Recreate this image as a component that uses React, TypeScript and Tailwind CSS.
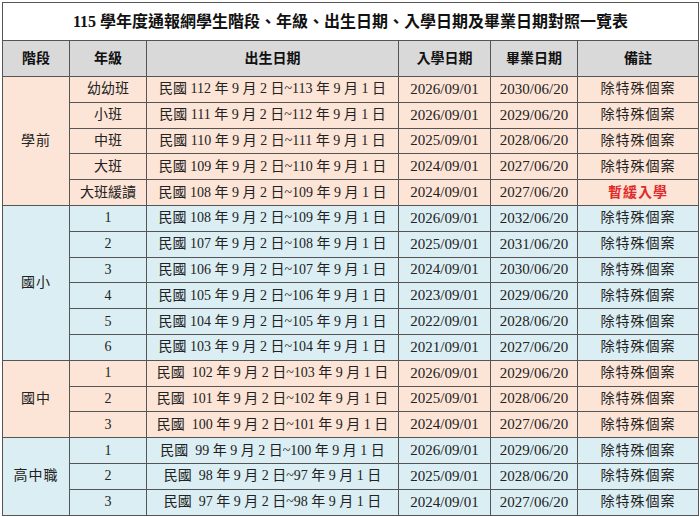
type Row = {
  grade: string;
  birth: string;
  enter: string;
  graduate: string;
  note?: string;
};

type Group = {
  stage: string;
  bg: string;
  rows: Row[];
};

const groups: Group[] = [
  {
    stage: "學前",
    bg: "bg-[#fce4d6]",
    rows: [
      { grade: "幼幼班", birth: "民國 112 年 9 月 2 日~113 年 9 月 1 日", enter: "2026/09/01", graduate: "2030/06/20" },
      { grade: "小班", birth: "民國 111 年 9 月 2 日~112 年 9 月 1 日", enter: "2026/09/01", graduate: "2029/06/20" },
      { grade: "中班", birth: "民國 110 年 9 月 2 日~111 年 9 月 1 日", enter: "2025/09/01", graduate: "2028/06/20" },
      { grade: "大班", birth: "民國 109 年 9 月 2 日~110 年 9 月 1 日", enter: "2024/09/01", graduate: "2027/06/20" },
      { grade: "大班緩讀", birth: "民國 108 年 9 月 2 日~109 年 9 月 1 日", enter: "2024/09/01", graduate: "2027/06/20", note: "暫緩入學" },
    ],
  },
  {
    stage: "國小",
    bg: "bg-[#daeef3]",
    rows: [
      { grade: "1", birth: "民國 108 年 9 月 2 日~109 年 9 月 1 日", enter: "2026/09/01", graduate: "2032/06/20" },
      { grade: "2", birth: "民國 107 年 9 月 2 日~108 年 9 月 1 日", enter: "2025/09/01", graduate: "2031/06/20" },
      { grade: "3", birth: "民國 106 年 9 月 2 日~107 年 9 月 1 日", enter: "2024/09/01", graduate: "2030/06/20" },
      { grade: "4", birth: "民國 105 年 9 月 2 日~106 年 9 月 1 日", enter: "2023/09/01", graduate: "2029/06/20" },
      { grade: "5", birth: "民國 104 年 9 月 2 日~105 年 9 月 1 日", enter: "2022/09/01", graduate: "2028/06/20" },
      { grade: "6", birth: "民國 103 年 9 月 2 日~104 年 9 月 1 日", enter: "2021/09/01", graduate: "2027/06/20" },
    ],
  },
  {
    stage: "國中",
    bg: "bg-[#fce4d6]",
    rows: [
      { grade: "1", birth: "民國  102 年 9 月 2 日~103 年 9 月 1 日", enter: "2026/09/01", graduate: "2029/06/20" },
      { grade: "2", birth: "民國  101 年 9 月 2 日~102 年 9 月 1 日", enter: "2025/09/01", graduate: "2028/06/20" },
      { grade: "3", birth: "民國  100 年 9 月 2 日~101 年 9 月 1 日", enter: "2024/09/01", graduate: "2027/06/20" },
    ],
  },
  {
    stage: "高中職",
    bg: "bg-[#daeef3]",
    rows: [
      { grade: "1", birth: "民國  99 年 9 月 2 日~100 年 9 月 1 日", enter: "2026/09/01", graduate: "2029/06/20" },
      { grade: "2", birth: "民國  98 年 9 月 2 日~97 年 9 月 1 日", enter: "2025/09/01", graduate: "2028/06/20" },
      { grade: "3", birth: "民國  97 年 9 月 2 日~98 年 9 月 1 日", enter: "2024/09/01", graduate: "2027/06/20" },
    ],
  },
];

const cell = "border border-[#555] text-center align-middle";

export default function App() {
  return (
    <div className="w-[700px] h-[517px] bg-white pt-[2px] pl-[2px] font-['Liberation_Serif','Noto_Sans_CJK_TC',serif] text-[#222]">
      <table className="w-[696px] table-fixed border-collapse text-[15px] leading-none">
        <colgroup>
          <col className="w-[67px]" />
          <col className="w-[77px]" />
          <col className="w-[252px]" />
          <col className="w-[92px]" />
          <col className="w-[87px]" />
          <col className="w-[121px]" />
        </colgroup>
        <thead>
          <tr className="h-[38px]">
            <th colSpan={6} className={`${cell} bg-white text-[16px] font-bold text-[#111]`}>
              115 學年度通報網學生階段、年級、出生日期、入學日期及畢業日期對照一覽表
            </th>
          </tr>
          <tr className="h-[36px] bg-[#d9d9d9] text-[14px] font-bold text-[#111]">
            <th className={cell}>階段</th>
            <th className={cell}>年級</th>
            <th className={cell}>出生日期</th>
            <th className={cell}>入學日期</th>
            <th className={cell}>畢業日期</th>
            <th className={cell}>備註</th>
          </tr>
        </thead>
        <tbody>
          {groups.map((g) =>
            g.rows.map((r, i) => (
              <tr key={g.stage + i} className={`h-[25.8px] ${g.bg}`}>
                {i === 0 && (
                  <td rowSpan={g.rows.length} className={`${cell} text-[14px] tracking-[1px]`}>
                    {g.stage}
                  </td>
                )}
                <td className={`${cell} text-[14px]`}>{r.grade}</td>
                <td className={`${cell} text-[14px] whitespace-pre`}>{r.birth}</td>
                <td className={cell}>{r.enter}</td>
                <td className={cell}>{r.graduate}</td>
                <td
                  className={`${cell} text-[14px] tracking-[1px] ${
                    r.note ? "text-[#e02a2a] font-bold" : ""
                  }`}
                >
                  {r.note ?? "除特殊個案"}
                </td>
              </tr>
            ))
          )}
        </tbody>
      </table>
    </div>
  );
}
